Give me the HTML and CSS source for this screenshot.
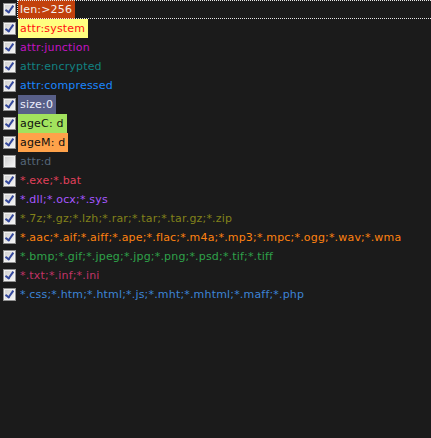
FILE: index.html
```html
<!DOCTYPE html>
<html lang="en">
<head>
    <meta charset="UTF-8">
    <title>Filters</title>
    <link rel="stylesheet" href="styles.css">
</head>
<body>

<ul class="filter-list">
    <li class="row focused"><span class="box checked"></span><span class="label hl-len">len:&gt;256</span></li>
    <li class="row"><span class="box checked"></span><span class="label hl-system">attr:system</span></li>
    <li class="row"><span class="box checked"></span><span class="label c-junction">attr:junction</span></li>
    <li class="row"><span class="box checked"></span><span class="label c-encrypted">attr:encrypted</span></li>
    <li class="row"><span class="box checked"></span><span class="label c-compressed">attr:compressed</span></li>
    <li class="row"><span class="box checked"></span><span class="label hl-size">size:0</span></li>
    <li class="row"><span class="box checked"></span><span class="label hl-agec">ageC: d</span></li>
    <li class="row"><span class="box checked"></span><span class="label hl-agem">ageM: d</span></li>
    <li class="row"><span class="box"></span><span class="label c-attrd">attr:d</span></li>
    <li class="row"><span class="box checked"></span><span class="label c-exe">*.exe;*.bat</span></li>
    <li class="row"><span class="box checked"></span><span class="label c-dll">*.dll;*.ocx;*.sys</span></li>
    <li class="row"><span class="box checked"></span><span class="label c-zip">*.7z;*.gz;*.lzh;*.rar;*.tar;*.tar.gz;*.zip</span></li>
    <li class="row"><span class="box checked"></span><span class="label c-audio">*.aac;*.aif;*.aiff;*.ape;*.flac;*.m4a;*.mp3;*.mpc;*.ogg;*.wav;*.wma</span></li>
    <li class="row"><span class="box checked"></span><span class="label c-image">*.bmp;*.gif;*.jpeg;*.jpg;*.png;*.psd;*.tif;*.tiff</span></li>
    <li class="row"><span class="box checked"></span><span class="label c-text">*.txt;*.inf;*.ini</span></li>
    <li class="row"><span class="box checked"></span><span class="label c-web">*.css;*.htm;*.html;*.js;*.mht;*.mhtml;*.maff;*.php</span></li>
</ul>

</body>
</html>
```

FILE: styles.css
```css
html, body {
    margin: 0;
    background: #1b1b1b;
    height: 100%;
}
body {
    font-family: "DejaVu Sans", Verdana, sans-serif;
    font-size: 11px;
    letter-spacing: 0.18px;
    overflow: hidden;
}
.filter-list {
    list-style: none;
    margin: 0;
    padding: 0;
}
.row {
    display: flex;
    align-items: center;
    height: 19px;
    padding-left: 3px;
    white-space: nowrap;
    position: relative;
}
.row.focused::after {
    content: "";
    position: absolute;
    left: 17px;
    right: 0;
    top: 0;
    bottom: 0;
    border: 1px dotted #e8e8e8;
    border-right: none;
}
.box {
    flex: none;
    width: 11px;
    height: 11px;
    border: 1px solid #8e8e8e;
    background: linear-gradient(135deg, #cfcfcf, #f6f6f6);
    box-shadow: inset 0 0 0 1px #f2f2f2;
    margin-right: 2px;
    position: relative;
}
.box.checked::before {
    content: "";
    position: absolute;
    left: 3px;
    top: 0;
    width: 3px;
    height: 7px;
    border: solid #33479c;
    border-width: 0 2px 2px 0;
    transform: rotate(35deg);
}
.label {
    height: 19px;
    line-height: 19px;
    padding: 0 3px 0 2px;
}
.hl-len { background: #c2410c; color: #f4f0ee; }
.hl-system { background: #ffff80; color: #ff1010; }
.hl-size { background: #585f88; color: #eceefc; }
.hl-agec { background: #a2e25e; color: #101010; }
.hl-agem { background: #ffa24a; color: #101010; }
.c-junction { color: #c213c2; }
.c-encrypted { color: #118282; }
.c-compressed { color: #1a86ff; }
.c-attrd { color: #56677a; }
.c-exe { color: #e0405a; }
.c-dll { color: #a657ff; }
.c-zip { color: #82821a; }
.c-audio { color: #ff8210; }
.c-image { color: #2fa24a; }
.c-text { color: #c23468; }
.c-web { color: #3d84d6; }
```
